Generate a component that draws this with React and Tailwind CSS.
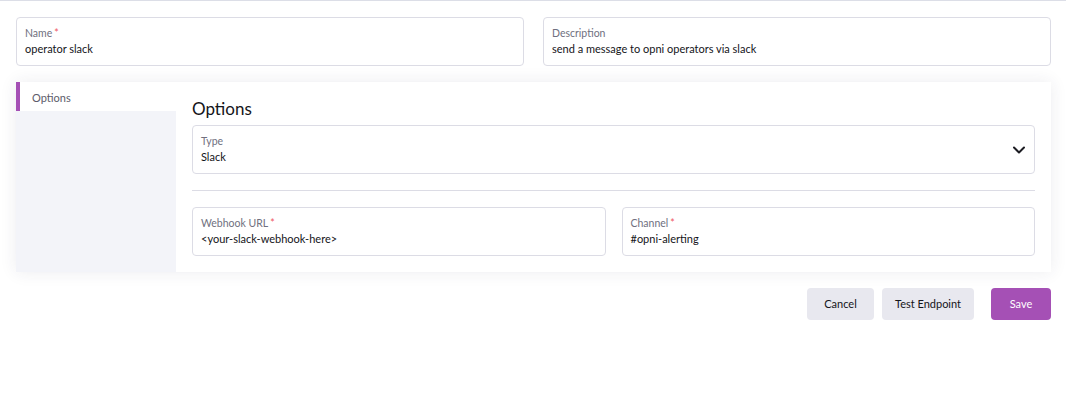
import React from "react";

function Field({ label, value, required }) {
  return (
    <div className="h-[49px] rounded-[4px] border border-[#dcdce5] bg-white px-2 pt-[8px]">
      <div className="text-[10.5px] leading-[15px] text-[#707080]">
        {label}
        {required && <span className="ml-[2px] text-[#f05a64]">*</span>}
      </div>
      <div className="text-[11px] leading-[16px] text-[#141419]">{value}</div>
    </div>
  );
}

export default function App() {
  return (
    <div
      className="min-h-[400px] border-t border-[#dcdee7] bg-white pl-4 pr-[15px] pt-4"
      style={{ fontFamily: "Lato, 'Noto Sans', sans-serif" }}
    >
      <div className="grid grid-cols-2 gap-[19px]">
        <Field label="Name" value="operator slack" required />
        <Field label="Description" value="send a message to opni operators via slack" />
      </div>

      <div className="mt-4 flex shadow-[0_0_16px_rgba(40,40,80,0.09)]">
        <div className="w-40 shrink-0 bg-[#f3f4f9]">
          <div className="h-[29px] border-l-4 border-[#a550b5] bg-white pl-3 pt-[8px] text-[11px] leading-[16px] text-[#5c5c6a]">
            Options
          </div>
        </div>
        <div className="flex-1 bg-white px-4 pb-4 pt-4">
          <h3 className="mb-[5px] text-[17px] leading-[22px] text-[#141419]">Options</h3>
          <div className="relative h-[49px] rounded-[4px] border border-[#dcdce5] bg-white px-2 pt-[8px]">
            <div className="text-[10.5px] leading-[15px] text-[#707080]">Type</div>
            <div className="text-[11px] leading-[16px] text-[#141419]">Slack</div>
            <svg
              className="absolute right-[8px] top-[19px]"
              width="14"
              height="10"
              viewBox="0 0 14 10"
              fill="none"
            >
              <path d="M2 2.5 L7 7.5 L12 2.5" stroke="#1c1c22" strokeWidth="2" strokeLinecap="round" strokeLinejoin="round" />
            </svg>
          </div>
          <div className="mt-4 h-px bg-[#dcdce5]" />
          <div className="mt-4 grid grid-cols-2 gap-4">
            <Field label="Webhook URL" value="<your-slack-webhook-here>" required />
            <Field label="Channel" value="#opni-alerting" required />
          </div>
        </div>
      </div>

      <div className="mt-4 flex justify-end gap-2">
        <button className="h-8 w-[67px] rounded-[4px] bg-[#e8e8ef] text-[11px] text-[#141419]">Cancel</button>
        <button className="h-8 w-[92px] rounded-[4px] bg-[#e8e8ef] text-[11px] text-[#141419]">Test Endpoint</button>
        <button className="ml-[9px] h-8 w-[60px] rounded-[4px] bg-[#a550b5] text-[11px] text-white">Save</button>
      </div>
    </div>
  );
}
